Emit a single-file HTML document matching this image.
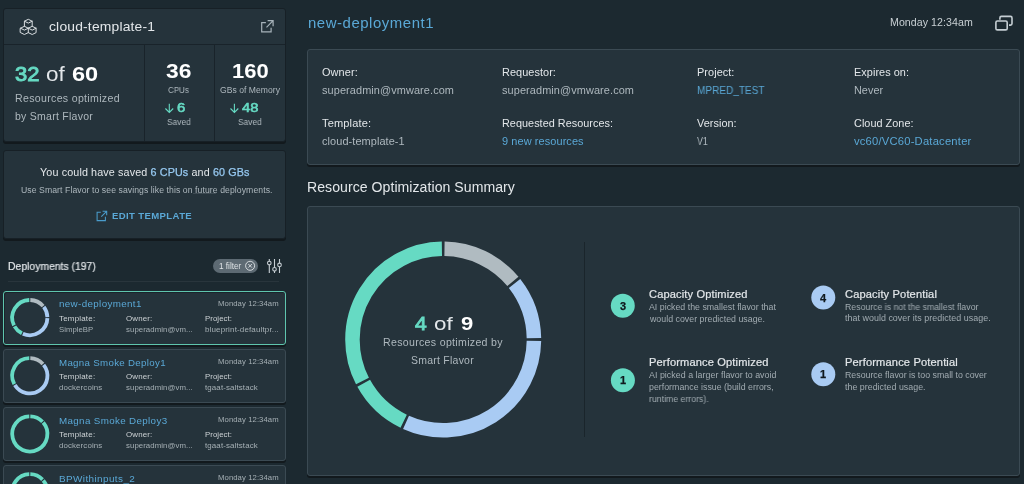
<!DOCTYPE html>
<html><head><meta charset="utf-8"><style>
html,body{margin:0;padding:0;}
body{width:1024px;height:484px;overflow:hidden;background:#1c2930;font-family:"Liberation Sans", sans-serif;position:relative;}
.t{position:absolute;white-space:nowrap;line-height:1;}
.card{position:absolute;box-sizing:border-box;background:#25333b;border:1px solid #3b4a53;border-radius:3px;box-shadow:0 2px 0 #12191d;}
.dk{border-color:#172026;}
.ln{position:absolute;}
.t{will-change:transform;}
svg{position:absolute;left:0;top:0;}
</style></head><body>
<div class="card dk" style="left:3px;top:8px;width:283px;height:134px;"></div>
<div class="ln" style="left:4px;top:44px;width:281px;height:1px;background:#19232a"></div>
<div class="ln" style="left:144px;top:45px;width:1px;height:96px;background:#19232a"></div>
<div class="ln" style="left:214px;top:45px;width:1px;height:96px;background:#19232a"></div>
<div class="card dk" style="left:3px;top:150px;width:283px;height:89px;"></div>
<div class="ln" style="left:193px;top:193px;width:23px;height:1px;background:#3d4a52"></div>
<div class="ln" style="left:8px;top:281px;width:271px;height:1px;background:#29353c"></div>
<div class="ln" style="left:212.5px;top:258.7px;width:45.6px;height:14px;border-radius:7px;background:#5d6a73"></div>
<div class="card" style="left:3px;top:291px;width:283px;height:54px;border-color:#5fc5ae;box-shadow:0 2px 0 #12191d, inset 1px 1px 0 #1a242a;"></div>
<div class="card" style="left:3px;top:349px;width:283px;height:54px;"></div>
<div class="card" style="left:3px;top:407px;width:283px;height:54px;"></div>
<div class="card" style="left:3px;top:465px;width:283px;height:54px;"></div>
<div class="card" style="left:307px;top:49px;width:713px;height:116px;"></div>
<div class="card" style="left:307px;top:206px;width:713px;height:270px;"></div>
<div class="ln" style="left:584px;top:242px;width:1px;height:195px;background:#1a252b"></div>
<svg width="1024" height="484" viewBox="0 0 1024 484">

<g fill="none" stroke="#d9dee1" stroke-width="1" stroke-linejoin="round" stroke-linecap="round">
<path d="M24.4 26.3 V21.2 L28.3 19.3 L32.2 21.2 V26.3 M24.4 21.2 L28.3 23.1 L32.2 21.2"/>
<path d="M20.5 28.2 L24.4 26.3 L28.3 28.2 V32.6 L24.4 34.5 L20.5 32.6 Z M20.5 28.2 L24.4 30.1 L28.3 28.2"/>
<path d="M28.3 28.2 L32.2 26.3 L36.1 28.2 V32.6 L32.2 34.5 L28.3 32.6 M28.3 28.2 L32.2 30.1 L36.1 28.2"/>
</g>
<g fill="none" stroke="#a7b3ba" stroke-width="1.2">
<path d="M265.9 22.7 H261.7 V31.8 H271.1 V27.8"/>
<path d="M266.5 27.3 L273.1 20.7 M267.6 20.7 H273.1 V26.2"/>
</g>
<g fill="none" stroke="#66dac3" stroke-width="1.1">
<path d="M169.3 103.8 V112.4 M165.4 108.5 L169.3 112.4 L173.2 108.5"/>
<path d="M234.4 103.8 V112.4 M230.5 108.5 L234.4 112.4 L238.3 108.5"/>
</g>
<g fill="none" stroke="#4a9ccb" stroke-width="1.05">
<path d="M100.8 212.2 H97.1 V220.6 H105.4 V216.8"/>
<path d="M101.3 216.7 L106.6 211.3 M102.6 211.2 H106.7 V215.3"/>
</g>
<g fill="none" stroke="#dfe3e6" stroke-width="0.9">
<circle cx="250.1" cy="265.8" r="4.5"/>
<path d="M248.3 264 L251.9 267.6 M251.9 264 L248.3 267.6"/>
</g>
<g fill="none" stroke="#c7cfd4" stroke-width="1.1">
<path d="M269.3 259 V273 M274.5 259 V273 M279.5 259 V273"/>
<circle cx="269.3" cy="263.1" r="1.8" fill="#1c2930"/>
<circle cx="274.5" cy="269.3" r="1.8" fill="#1c2930"/>
<circle cx="279.5" cy="264.9" r="1.8" fill="#1c2930"/>
</g>
<g fill="none" stroke="#c5ced3" stroke-width="1.6">
<rect x="995.9" y="21" width="11.3" height="8.9" rx="1.5"/>
<path d="M999.9 19.8 V17.9 Q999.9 16.4 1001.4 16.4 H1010.5 Q1012 16.4 1012 17.9 V23.6 Q1012 25.1 1010.5 25.1 H1009"/>
</g>
<path d="M444.50 248.76A90.75 90.75 0 0 1 512.90 281.39" stroke="#b0bbc1" stroke-width="14.5" fill="none"/><path d="M514.54 283.40A90.75 90.75 0 0 1 533.94 338.20" stroke="#a9cbf3" stroke-width="14.5" fill="none"/><path d="M533.94 340.80A90.75 90.75 0 0 1 406.03 422.29" stroke="#a9cbf3" stroke-width="14.5" fill="none"/><path d="M403.67 421.19A90.75 90.75 0 0 1 363.69 383.25" stroke="#66dac3" stroke-width="14.5" fill="none"/><path d="M362.47 380.95A90.75 90.75 0 0 1 441.90 248.76" stroke="#66dac3" stroke-width="14.5" fill="none"/><path d="M30.32 300.01A17.6 17.6 0 0 1 43.14 306.12" stroke="#b0bbc1" stroke-width="3.8" fill="none"/><path d="M43.80 306.93A17.6 17.6 0 0 1 47.39 317.08" stroke="#a9cbf3" stroke-width="3.8" fill="none"/><path d="M47.39 318.12A17.6 17.6 0 0 1 22.84 333.76" stroke="#a9cbf3" stroke-width="3.8" fill="none"/><path d="M21.89 333.32A17.6 17.6 0 0 1 14.51 326.32" stroke="#66dac3" stroke-width="3.8" fill="none"/><path d="M14.02 325.40A17.6 17.6 0 0 1 29.28 300.01" stroke="#66dac3" stroke-width="3.8" fill="none"/><path d="M30.32 358.21A17.6 17.6 0 0 1 42.94 364.09" stroke="#b0bbc1" stroke-width="3.8" fill="none"/><path d="M43.61 364.89A17.6 17.6 0 1 1 14.83 385.05" stroke="#a9cbf3" stroke-width="3.8" fill="none"/><path d="M14.30 384.14A17.6 17.6 0 0 1 29.28 358.21" stroke="#66dac3" stroke-width="3.8" fill="none"/><path d="M30.32 416.31A17.6 17.6 0 0 1 42.52 421.74" stroke="#66dac3" stroke-width="3.8" fill="none"/><path d="M43.22 422.52A17.6 17.6 0 1 1 29.28 416.31" stroke="#66dac3" stroke-width="3.8" fill="none"/><path d="M30.32 474.21A17.6 17.6 0 0 1 42.52 479.64" stroke="#66dac3" stroke-width="3.8" fill="none"/><path d="M43.22 480.42A17.6 17.6 0 1 1 29.28 474.21" stroke="#66dac3" stroke-width="3.8" fill="none"/><circle cx="622.8" cy="305.8" r="12" fill="#66dac3"/><circle cx="622.9" cy="380.3" r="12" fill="#66dac3"/><circle cx="823.3" cy="297.6" r="12" fill="#a9cbf3"/><circle cx="823.3" cy="374.2" r="12" fill="#a9cbf3"/>
</svg>
<div class="t" style="left:48.50px;top:20.00px;font-size:13.5px;color:#e3e7ea;letter-spacing:0.177px;transform:scaleX(1.027);transform-origin:0.00px 0;">cloud-template-1</div>
<div class="t" style="left:14.70px;top:64.50px;font-size:19.5px;color:#66dac3;transform:scaleX(1.127);transform-origin:0.00px 0;-webkit-text-stroke:0.9px currentColor;">32</div>
<div class="t" style="left:46.00px;top:64.50px;font-size:19.5px;color:#e3e7ea;transform:scaleX(1.152);transform-origin:0.00px 0;">of</div>
<div class="t" style="left:72.30px;top:64.50px;font-size:19.5px;color:#ffffff;font-weight:700;transform:scaleX(1.209);transform-origin:0.00px 0;">60</div>
<div class="t" style="left:14.50px;top:93.75px;font-size:10px;color:#aeb8be;letter-spacing:0.291px;transform:scaleX(1.060);transform-origin:0.00px 0;">Resources optimized</div>
<div class="t" style="left:14.50px;top:111.75px;font-size:10px;color:#aeb8be;letter-spacing:0.247px;transform:scaleX(1.051);transform-origin:0.00px 0;">by Smart Flavor</div>
<div class="t" style="left:165.60px;top:60.25px;font-size:21px;color:#ffffff;font-weight:700;transform:scaleX(1.085);transform-origin:0.00px 0;">36</div>
<div class="t" style="left:167.50px;top:86.00px;font-size:8.5px;color:#aeb8be;transform:scaleX(0.939);transform-origin:0.00px 0;">CPUs</div>
<div class="t" style="left:176.80px;top:102.35px;font-size:12.8px;color:#66dac3;transform:scaleX(1.171);transform-origin:0.00px 0;-webkit-text-stroke:0.6px currentColor;">6</div>
<div class="t" style="left:167.20px;top:117.75px;font-size:9px;color:#aeb8be;transform:scaleX(0.933);transform-origin:0.00px 0;">Saved</div>
<div class="t" style="left:231.50px;top:60.25px;font-size:21px;color:#ffffff;font-weight:700;transform:scaleX(1.046);transform-origin:1.00px 0;">160</div>
<div class="t" style="left:220.10px;top:86.00px;font-size:8.5px;color:#aeb8be;letter-spacing:0.042px;transform:scaleX(1.008);transform-origin:0.00px 0;">GBs of Memory</div>
<div class="t" style="left:241.90px;top:102.35px;font-size:12.8px;color:#66dac3;transform:scaleX(1.148);transform-origin:0.00px 0;-webkit-text-stroke:0.6px currentColor;">48</div>
<div class="t" style="left:237.50px;top:117.75px;font-size:9px;color:#aeb8be;transform:scaleX(0.929);transform-origin:0.00px 0;">Saved</div>
<div class="t" style="left:39.90px;top:167.00px;font-size:10.5px;color:#e3e7ea;letter-spacing:0.127px;transform:scaleX(1.024);transform-origin:0.00px 0;">You could have saved <span style="color:#96c8f0;-webkit-text-stroke:0.25px currentColor">6 CPUs</span> and <span style="color:#96c8f0;-webkit-text-stroke:0.25px currentColor">60 GBs</span></div>
<div class="t" style="left:20.80px;top:186.00px;font-size:8.5px;color:#aeb8be;letter-spacing:0.070px;transform:scaleX(1.019);transform-origin:0.00px 0;">Use Smart Flavor to see savings like this on future deployments.</div>
<div class="t" style="left:111.90px;top:211.75px;font-size:9px;color:#5aa8d6;font-weight:700;letter-spacing:0.348px;transform:scaleX(1.063);transform-origin:0.00px 0;">EDIT TEMPLATE</div>
<div class="t" style="left:7.50px;top:261.00px;font-size:10.5px;color:#e3e7ea;transform:scaleX(0.990);transform-origin:0.00px 0;-webkit-text-stroke:0.2px currentColor;">Deployments (197)</div>
<div class="t" style="left:218.70px;top:262.65px;font-size:8.2px;color:#dfe3e6;transform:scaleX(0.993);transform-origin:0.00px 0;">1 filter</div>
<div class="t" style="left:59.10px;top:299.65px;font-size:9.2px;color:#5aa8d6;letter-spacing:0.331px;transform:scaleX(1.068);transform-origin:0.00px 0;">new-deployment1</div>
<div class="t" style="left:217.80px;top:299.95px;font-size:7.6px;color:#a6b0b5;letter-spacing:0.074px;transform:scaleX(1.017);transform-origin:0.00px 0;">Monday 12:34am</div>
<div class="t" style="left:59.10px;top:314.90px;font-size:7.7px;color:#cdd2d5;letter-spacing:0.168px;transform:scaleX(1.042);transform-origin:0.00px 0;">Template:</div>
<div class="t" style="left:125.90px;top:314.90px;font-size:7.7px;color:#cdd2d5;letter-spacing:0.142px;transform:scaleX(1.030);transform-origin:0.00px 0;">Owner:</div>
<div class="t" style="left:204.70px;top:314.90px;font-size:7.7px;color:#cdd2d5;letter-spacing:0.061px;transform:scaleX(1.017);transform-origin:0.00px 0;">Project:</div>
<div class="t" style="left:59.10px;top:325.90px;font-size:7.7px;color:#a6b0b5;letter-spacing:0.027px;transform:scaleX(1.006);transform-origin:0.00px 0;">SimpleBP</div>
<div class="t" style="left:125.90px;top:325.90px;font-size:7.7px;color:#a6b0b5;letter-spacing:0.066px;transform:scaleX(1.016);transform-origin:0.00px 0;">superadmin@vm...</div>
<div class="t" style="left:204.70px;top:325.90px;font-size:7.7px;color:#a6b0b5;letter-spacing:0.132px;transform:scaleX(1.043);transform-origin:0.00px 0;">blueprint-defaultpr...</div>
<div class="t" style="left:59.10px;top:358.65px;font-size:9.2px;color:#5aa8d6;letter-spacing:0.289px;transform:scaleX(1.058);transform-origin:0.00px 0;">Magna Smoke Deploy1</div>
<div class="t" style="left:217.80px;top:357.95px;font-size:7.6px;color:#a6b0b5;letter-spacing:0.074px;transform:scaleX(1.017);transform-origin:0.00px 0;">Monday 12:34am</div>
<div class="t" style="left:59.10px;top:372.90px;font-size:7.7px;color:#cdd2d5;letter-spacing:0.168px;transform:scaleX(1.042);transform-origin:0.00px 0;">Template:</div>
<div class="t" style="left:125.90px;top:372.90px;font-size:7.7px;color:#cdd2d5;letter-spacing:0.142px;transform:scaleX(1.030);transform-origin:0.00px 0;">Owner:</div>
<div class="t" style="left:204.70px;top:372.90px;font-size:7.7px;color:#cdd2d5;letter-spacing:0.061px;transform:scaleX(1.017);transform-origin:0.00px 0;">Project:</div>
<div class="t" style="left:59.10px;top:383.90px;font-size:7.7px;color:#a6b0b5;letter-spacing:0.108px;transform:scaleX(1.027);transform-origin:0.00px 0;">dockercoins</div>
<div class="t" style="left:125.90px;top:383.90px;font-size:7.7px;color:#a6b0b5;letter-spacing:0.066px;transform:scaleX(1.016);transform-origin:0.00px 0;">superadmin@vm...</div>
<div class="t" style="left:204.70px;top:383.90px;font-size:7.7px;color:#a6b0b5;letter-spacing:0.110px;transform:scaleX(1.032);transform-origin:0.00px 0;">tgaat-saltstack</div>
<div class="t" style="left:59.10px;top:416.65px;font-size:9.2px;color:#5aa8d6;letter-spacing:0.329px;transform:scaleX(1.066);transform-origin:0.00px 0;">Magna Smoke Deploy3</div>
<div class="t" style="left:217.80px;top:415.95px;font-size:7.6px;color:#a6b0b5;letter-spacing:0.074px;transform:scaleX(1.017);transform-origin:0.00px 0;">Monday 12:34am</div>
<div class="t" style="left:59.10px;top:430.90px;font-size:7.7px;color:#cdd2d5;letter-spacing:0.168px;transform:scaleX(1.042);transform-origin:0.00px 0;">Template:</div>
<div class="t" style="left:125.90px;top:430.90px;font-size:7.7px;color:#cdd2d5;letter-spacing:0.142px;transform:scaleX(1.030);transform-origin:0.00px 0;">Owner:</div>
<div class="t" style="left:204.70px;top:430.90px;font-size:7.7px;color:#cdd2d5;letter-spacing:0.061px;transform:scaleX(1.017);transform-origin:0.00px 0;">Project:</div>
<div class="t" style="left:59.10px;top:441.90px;font-size:7.7px;color:#a6b0b5;letter-spacing:0.108px;transform:scaleX(1.027);transform-origin:0.00px 0;">dockercoins</div>
<div class="t" style="left:125.90px;top:441.90px;font-size:7.7px;color:#a6b0b5;letter-spacing:0.066px;transform:scaleX(1.016);transform-origin:0.00px 0;">superadmin@vm...</div>
<div class="t" style="left:204.70px;top:441.90px;font-size:7.7px;color:#a6b0b5;letter-spacing:0.110px;transform:scaleX(1.032);transform-origin:0.00px 0;">tgaat-saltstack</div>
<div class="t" style="left:59.10px;top:474.65px;font-size:9.2px;color:#5aa8d6;letter-spacing:0.372px;transform:scaleX(1.080);transform-origin:0.00px 0;">BPWithinputs_2</div>
<div class="t" style="left:217.80px;top:473.95px;font-size:7.6px;color:#a6b0b5;letter-spacing:0.074px;transform:scaleX(1.017);transform-origin:0.00px 0;">Monday 12:34am</div>
<div class="t" style="left:307.50px;top:16.25px;font-size:14px;color:#5aa8d6;letter-spacing:0.504px;transform:scaleX(1.068);transform-origin:0.00px 0;">new-deployment1</div>
<div class="t" style="left:890.20px;top:17.00px;font-size:10.5px;color:#c9d0d4;letter-spacing:0.061px;transform:scaleX(1.010);transform-origin:0.00px 0;">Monday 12:34am</div>
<div class="t" style="left:322.40px;top:66.85px;font-size:10.8px;color:#e3e7ea;letter-spacing:0.089px;transform:scaleX(1.013);transform-origin:0.00px 0;">Owner:</div>
<div class="t" style="left:322.40px;top:84.85px;font-size:10.8px;color:#aeb8be;letter-spacing:0.085px;transform:scaleX(1.013);transform-origin:0.00px 0;">superadmin@vmware.com</div>
<div class="t" style="left:502.10px;top:66.85px;font-size:10.8px;color:#e3e7ea;letter-spacing:0.060px;transform:scaleX(1.010);transform-origin:0.00px 0;">Requestor:</div>
<div class="t" style="left:502.10px;top:84.85px;font-size:10.8px;color:#aeb8be;letter-spacing:0.085px;transform:scaleX(1.013);transform-origin:0.00px 0;">superadmin@vmware.com</div>
<div class="t" style="left:696.90px;top:66.85px;font-size:10.8px;color:#e3e7ea;letter-spacing:0.056px;transform:scaleX(1.011);transform-origin:0.00px 0;">Project:</div>
<div class="t" style="left:696.90px;top:84.85px;font-size:10.8px;color:#5aa8d6;transform:scaleX(0.930);transform-origin:0.00px 0;">MPRED_TEST</div>
<div class="t" style="left:854.10px;top:66.85px;font-size:10.8px;color:#e3e7ea;letter-spacing:0.049px;transform:scaleX(1.009);transform-origin:0.00px 0;">Expires on:</div>
<div class="t" style="left:854.10px;top:84.85px;font-size:10.8px;color:#aeb8be;letter-spacing:0.037px;transform:scaleX(1.005);transform-origin:0.00px 0;">Never</div>
<div class="t" style="left:322.40px;top:117.85px;font-size:10.8px;color:#e3e7ea;letter-spacing:0.134px;transform:scaleX(1.023);transform-origin:0.00px 0;">Template:</div>
<div class="t" style="left:322.40px;top:135.85px;font-size:10.8px;color:#aeb8be;letter-spacing:0.075px;transform:scaleX(1.014);transform-origin:0.00px 0;">cloud-template-1</div>
<div class="t" style="left:502.10px;top:117.85px;font-size:10.8px;color:#e3e7ea;letter-spacing:0.031px;transform:scaleX(1.005);transform-origin:0.00px 0;">Requested Resources:</div>
<div class="t" style="left:502.10px;top:135.85px;font-size:10.8px;color:#5aa8d6;letter-spacing:0.084px;transform:scaleX(1.015);transform-origin:0.00px 0;">9 new resources</div>
<div class="t" style="left:696.90px;top:117.85px;font-size:10.8px;color:#e3e7ea;letter-spacing:0.042px;transform:scaleX(1.008);transform-origin:0.00px 0;">Version:</div>
<div class="t" style="left:696.90px;top:135.85px;font-size:10.8px;color:#aeb8be;transform:scaleX(0.811);transform-origin:0.00px 0;">V1</div>
<div class="t" style="left:854.10px;top:117.85px;font-size:10.8px;color:#e3e7ea;letter-spacing:0.034px;transform:scaleX(1.006);transform-origin:0.00px 0;">Cloud Zone:</div>
<div class="t" style="left:854.10px;top:135.85px;font-size:10.8px;color:#5aa8d6;letter-spacing:0.205px;transform:scaleX(1.037);transform-origin:0.00px 0;">vc60/VC60-Datacenter</div>
<div class="t" style="left:306.50px;top:180.25px;font-size:14px;color:#e3e7ea;letter-spacing:0.044px;transform:scaleX(1.006);transform-origin:1.00px 0;">Resource Optimization Summary</div>
<div class="t" style="left:414.80px;top:314.25px;font-size:19px;color:#66dac3;transform:scaleX(1.109);transform-origin:0.00px 0;-webkit-text-stroke:0.9px currentColor;">4</div>
<div class="t" style="left:434.30px;top:314.25px;font-size:19px;color:#e3e7ea;transform:scaleX(1.177);transform-origin:0.00px 0;">of</div>
<div class="t" style="left:461.00px;top:314.25px;font-size:19px;color:#ffffff;font-weight:700;transform:scaleX(1.160);transform-origin:0.00px 0;">9</div>
<div class="t" style="left:383.00px;top:337.75px;font-size:10px;color:#aeb8be;letter-spacing:0.289px;transform:scaleX(1.060);transform-origin:0.00px 0;">Resources optimized by</div>
<div class="t" style="left:411.40px;top:355.75px;font-size:10px;color:#aeb8be;letter-spacing:0.239px;transform:scaleX(1.047);transform-origin:0.00px 0;">Smart Flavor</div>
<div class="t" style="left:649.20px;top:288.85px;font-size:10.8px;color:#e3e7ea;letter-spacing:0.138px;transform:scaleX(1.026);transform-origin:0.00px 0;-webkit-text-stroke:0.2px currentColor;">Capacity Optimized</div>
<div class="t" style="left:649.20px;top:302.85px;font-size:8.8px;color:#a2acb2;letter-spacing:0.006px;">AI picked the smallest flavor that</div>
<div class="t" style="left:650.20px;top:314.85px;font-size:8.8px;color:#a2acb2;letter-spacing:0.019px;">would cover predicted usage.</div>
<div class="t" style="left:649.20px;top:356.85px;font-size:10.8px;color:#e3e7ea;letter-spacing:0.146px;transform:scaleX(1.026);transform-origin:0.00px 0;-webkit-text-stroke:0.2px currentColor;">Performance Optimized</div>
<div class="t" style="left:649.20px;top:370.85px;font-size:8.8px;color:#a2acb2;letter-spacing:0.027px;transform:scaleX(1.007);transform-origin:0.00px 0;">AI picked a larger flavor to avoid</div>
<div class="t" style="left:649.20px;top:382.85px;font-size:8.8px;color:#a2acb2;letter-spacing:0.014px;">performance issue (build errors,</div>
<div class="t" style="left:649.20px;top:394.85px;font-size:8.8px;color:#a2acb2;transform:scaleX(0.992);transform-origin:0.00px 0;">runtime errors).</div>
<div class="t" style="left:845.30px;top:288.85px;font-size:10.8px;color:#e3e7ea;letter-spacing:0.137px;transform:scaleX(1.028);transform-origin:0.00px 0;-webkit-text-stroke:0.2px currentColor;">Capacity Potential</div>
<div class="t" style="left:845.30px;top:302.85px;font-size:8.8px;color:#a2acb2;transform:scaleX(0.992);transform-origin:0.00px 0;">Resource is not the smallest flavor</div>
<div class="t" style="left:845.30px;top:313.85px;font-size:8.8px;color:#a2acb2;letter-spacing:0.038px;transform:scaleX(1.010);transform-origin:0.00px 0;">that would cover its predicted usage.</div>
<div class="t" style="left:845.30px;top:356.85px;font-size:10.8px;color:#e3e7ea;letter-spacing:0.143px;transform:scaleX(1.028);transform-origin:0.00px 0;-webkit-text-stroke:0.2px currentColor;">Performance Potential</div>
<div class="t" style="left:845.30px;top:370.85px;font-size:8.8px;color:#a2acb2;">Resource flavor is too small to cover</div>
<div class="t" style="left:845.30px;top:382.85px;font-size:8.8px;color:#a2acb2;letter-spacing:0.022px;transform:scaleX(1.005);transform-origin:0.00px 0;">the predicted usage.</div>
<div class="t" style="left:619.80px;top:300.75px;font-size:11px;color:#10191e;font-weight:700;-webkit-text-stroke:0.25px currentColor;">3</div>
<div class="t" style="left:619.90px;top:374.75px;font-size:11px;color:#10191e;font-weight:700;-webkit-text-stroke:0.25px currentColor;">1</div>
<div class="t" style="left:819.80px;top:292.75px;font-size:11px;color:#10191e;font-weight:700;-webkit-text-stroke:0.25px currentColor;">4</div>
<div class="t" style="left:820.30px;top:368.75px;font-size:11px;color:#10191e;font-weight:700;-webkit-text-stroke:0.25px currentColor;">1</div>
</body></html>
